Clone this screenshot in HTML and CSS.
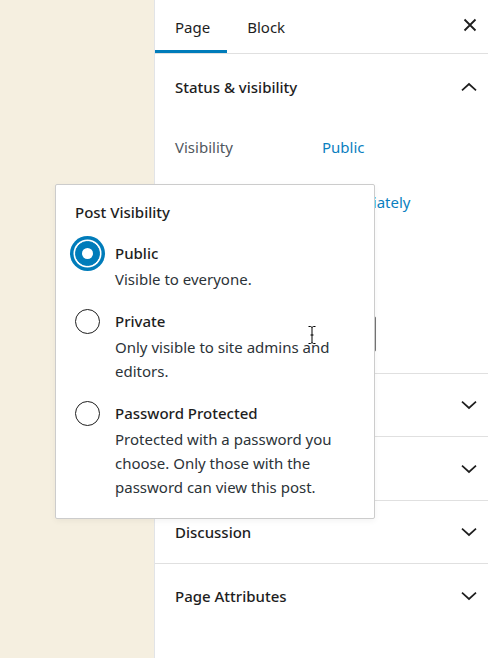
FILE: index.html
```html
<!DOCTYPE html>
<html lang="en">
<head>
<meta charset="utf-8">
<title>Page settings</title>
<link rel="stylesheet" href="styles.css">
</head>
<body>
<div class="app">
  <div class="canvas"></div>
  <aside class="sidebar">
    <div class="tabs">
      <button class="tab active">Page</button>
      <button class="tab">Block</button>
      <button class="close" aria-label="Close settings">
        <svg width="14" height="14" viewBox="0 0 14 14"><path d="M1.5 1.5L12.5 12.5M12.5 1.5L1.5 12.5" stroke="#1e1e1e" stroke-width="1.8" fill="none"/></svg>
      </button>
    </div>

    <section class="panel">
      <div class="panel-head status-head">
        <span class="panel-title">Status &amp; visibility</span>
        <svg class="chev" width="16" height="10" viewBox="0 0 16 10"><path d="M1 8.3L8 2l7 6.3" stroke="#1e1e1e" stroke-width="1.7" fill="none"/></svg>
      </div>
      <div class="panel-body">
        <div class="row"><span class="label">Visibility</span><a class="link">Public</a></div>
        <div class="row"><span class="label">Publish</span><a class="link">Immediately</a></div>
        <div class="row row-gap"><span class="checkbox"></span></div>
        <div class="select"></div>
      </div>
    </section>

    <section class="panel">
      <div class="panel-head">
        <span class="panel-title hidden-title">Permalink</span>
        <svg class="chev" width="16" height="10" viewBox="0 0 16 10"><path d="M1 1.7L8 8l7-6.3" stroke="#1e1e1e" stroke-width="1.7" fill="none"/></svg>
      </div>
    </section>

    <section class="panel">
      <div class="panel-head tall">
        <span class="panel-title hidden-title">Featured image</span>
        <svg class="chev" width="16" height="10" viewBox="0 0 16 10"><path d="M1 1.7L8 8l7-6.3" stroke="#1e1e1e" stroke-width="1.7" fill="none"/></svg>
      </div>
    </section>

    <section class="panel">
      <div class="panel-head">
        <span class="panel-title">Discussion</span>
        <svg class="chev" width="16" height="10" viewBox="0 0 16 10"><path d="M1 1.7L8 8l7-6.3" stroke="#1e1e1e" stroke-width="1.7" fill="none"/></svg>
      </div>
    </section>

    <section class="panel">
      <div class="panel-head last">
        <span class="panel-title">Page Attributes</span>
        <svg class="chev" width="16" height="10" viewBox="0 0 16 10"><path d="M1 1.7L8 8l7-6.3" stroke="#1e1e1e" stroke-width="1.7" fill="none"/></svg>
      </div>
    </section>
  </aside>

  <div class="popover">
    <div class="pop-title">Post Visibility</div>
    <div class="option">
      <span class="radio checked"></span>
      <div class="opt-text">
        <div class="opt-title">Public</div>
        <div class="opt-desc">Visible to everyone.</div>
      </div>
    </div>
    <div class="option">
      <span class="radio"></span>
      <div class="opt-text">
        <div class="opt-title">Private</div>
        <div class="opt-desc">Only visible to site admins and editors.</div>
      </div>
    </div>
    <div class="option">
      <span class="radio"></span>
      <div class="opt-text">
        <div class="opt-title">Password Protected</div>
        <div class="opt-desc">Protected with a password you choose. Only those with the password can view this post.</div>
      </div>
    </div>
  </div>

  <svg class="cursor" width="8" height="18" viewBox="0 0 8 18"><path d="M0.5 0.5h2.2l1.3 1 1.3-1h2.2M4 1.5v15M0.5 17.5h2.2l1.3-1 1.3 1h2.2M2.5 9h3" stroke="#000" stroke-width="1" fill="none"/></svg>
</div>
</body>
</html>
```

FILE: styles.css
```css
* { box-sizing: border-box; }

html, body {
  margin: 0;
  padding: 0;
}

body {
  font-family: "Noto Sans", "Open Sans", sans-serif;
  font-size: 14px;
  color: #1e1e1e;
  background: #fff;
}

.app {
  position: relative;
  display: flex;
  width: 488px;
  height: 658px;
  overflow: hidden;
}

.canvas {
  width: 154px;
  flex: none;
  background: #f5efe0;
}

.sidebar {
  flex: 1;
  background: #fff;
  border-left: 1px solid #e2e4e7;
}

/* Tabs */
.tabs {
  display: flex;
  align-items: stretch;
  height: 54px;
  border-bottom: 1px solid #e0e0e0;
}

.tab {
  border: 0;
  background: none;
  font: inherit;
  font-size: 15px;
  color: #1e1e1e;
  padding: 0 18px 0 20px;
  height: 53px;
  cursor: pointer;
}

.tab.active {
  padding-right: 17px;
  box-shadow: inset 0 -3px 0 #007cba;
}

.close {
  margin-left: auto;
  border: 0;
  background: none;
  width: 40px;
  height: 53px;
  padding: 0 11px 3px 0;
  display: flex;
  align-items: center;
  justify-content: flex-end;
}

/* Panels */
.panel + .panel {
  border-top: 1px solid #e0e0e0;
}

.panel-head {
  height: 62px;
  display: flex;
  align-items: center;
  justify-content: space-between;
  padding: 0 11px 0 20px;
}

.panel-head.status-head {
  height: 65px;
}

.panel-head.tall {
  height: 63px;
}

.panel-head.last {
  height: 64px;
}

.panel-title {
  font-size: 15px;
  font-weight: 500;
  color: #1e1e1e;
}

.hidden-title {
  visibility: hidden;
}

.panel-body {
  padding: 11px 20px 21px;
}

.row {
  display: flex;
  align-items: center;
  height: 34px;
  margin-bottom: 21px;
}

.row.row-gap {
  margin-bottom: 42px;
}

.label {
  width: 147px;
  font-size: 15px;
  color: #50575e;
}

.link {
  font-size: 15px;
  color: #0a7fc0;
}

.checkbox {
  width: 16px;
  height: 16px;
  border: 1px solid #757575;
  border-radius: 2px;
  margin-right: 10px;
}

.select {
  width: 201px;
  height: 36px;
  border: 1px solid #757575;
  border-radius: 2px;
}

/* Popover */
.popover {
  position: absolute;
  left: 55px;
  top: 184px;
  width: 320px;
  height: 335px;
  background: #fff;
  border: 1px solid #cccccc;
  border-radius: 2px;
  box-shadow: 0 2px 6px rgba(0, 0, 0, 0.05);
  padding: 15px 19px 18px 19px;
}

.pop-title {
  font-size: 15px;
  font-weight: 500;
  line-height: 24px;
  color: #1e1e1e;
  margin-bottom: 17px;
}

.option {
  display: flex;
  gap: 15px;
  margin-bottom: 18px;
}

.option:last-child {
  margin-bottom: 0;
}

.radio {
  flex: none;
  width: 25px;
  height: 25px;
  border: 1.5px solid #1e1e1e;
  border-radius: 50%;
  background: #fff;
  position: relative;
}

.radio.checked {
  border-color: #007cba;
  background: #007cba;
  box-shadow: 0 0 0 1.5px #fff, 0 0 0 5px #007cba;
}

.radio.checked::after {
  content: "";
  position: absolute;
  left: 50%;
  top: 50%;
  width: 11px;
  height: 11px;
  margin: -5.5px 0 0 -5.5px;
  border-radius: 50%;
  background: #fff;
}

.opt-text {
  flex: 1;
}

.opt-title {
  font-size: 15px;
  font-weight: 500;
  line-height: 24px;
  margin-bottom: 2px;
  color: #1e1e1e;
}

.opt-desc {
  font-size: 15px;
  line-height: 24px;
  color: #2c3338;
}

.cursor {
  position: absolute;
  left: 308px;
  top: 326px;
}
```
